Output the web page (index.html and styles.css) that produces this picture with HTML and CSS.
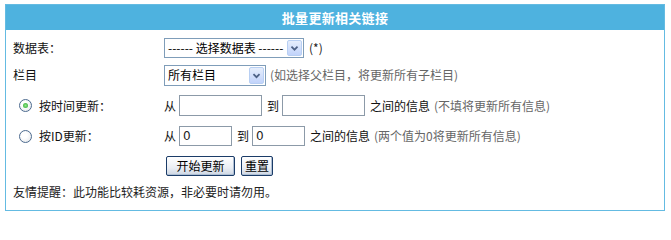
FILE: index.html
```html
<!DOCTYPE html>
<html lang="zh-CN">
<head>
<meta charset="utf-8">
<title>批量更新相关链接</title>
<link rel="stylesheet" href="styles.css">
</head>
<body>
<div class="panel">
  <div class="head">批量更新相关链接</div>
  <div class="body">
    <div class="row r1">
      <div class="label">数据表：</div>
      <div class="ctrl">
        <span class="sel w1"><span class="sel-text">------ 选择数据表 ------</span><span class="arrow"><svg width="15" height="16" viewBox="0 0 15 16"><path d="M4 6.5 L7.5 10 L11 6.5" fill="none" stroke="#4d6185" stroke-width="2"/></svg></span></span>
        <span class="note dark">(*)</span>
      </div>
    </div>
    <div class="row r2">
      <div class="label">栏目</div>
      <div class="ctrl">
        <span class="sel w2"><span class="sel-text">所有栏目</span><span class="arrow"><svg width="15" height="17" viewBox="0 0 15 17"><path d="M4 7 L7.5 10.5 L11 7" fill="none" stroke="#4d6185" stroke-width="2"/></svg></span></span>
        <span class="note">(如选择父栏目，将更新所有子栏目)</span>
      </div>
    </div>
    <div class="row r3">
      <div class="label"><span class="radio on"></span>按时间更新：</div>
      <div class="ctrl">
        <span class="word">从</span><span class="inp w3"></span><span class="word">到</span><span class="inp w3"></span><span class="word">之间的信息</span><span class="note">(不填将更新所有信息)</span>
      </div>
    </div>
    <div class="row r4">
      <div class="label"><span class="radio"></span>按ID更新：</div>
      <div class="ctrl">
        <span class="word">从</span><span class="inp w4">0</span><span class="word">到</span><span class="inp w4">0</span><span class="word">之间的信息</span><span class="note">(两个值为0将更新所有信息)</span>
      </div>
    </div>
    <div class="row r5">
      <div class="label"></div>
      <div class="ctrl">
        <span class="btn b1">开始更新</span><span class="btn b2">重置</span>
      </div>
    </div>
    <div class="tip">友情提醒：此功能比较耗资源，非必要时请勿用。</div>
  </div>
</div>
</body>
</html>
```
FILE: styles.css
```css
html, body {
  margin: 0;
  padding: 0;
  background: #ffffff;
}
body {
  font-family: Tahoma, "DejaVu Sans", "Noto Sans CJK SC", sans-serif;
  font-size: 12px;
  color: #000;
}
.panel {
  margin: 4px 0 0 5px;
  width: 660px;
  height: 207px;
  border: 1px solid #64bbe2;
  box-sizing: border-box;
}
.head {
  height: 25px;
  background: #4eb2df;
  color: #fff;
  font-weight: bold;
  font-size: 13px;
  line-height: 25px;
  text-align: center;
  font-family: "Noto Sans CJK SC", sans-serif;
  letter-spacing: 0.3px;
}
.body {
  padding: 4px 0 0 7px;
}
.row {
  display: flex;
  align-items: center;
}
.r1 { height: 28px; }
.r2 { height: 26px; }
.r3 { height: 35px; }
.r4 { height: 26px; }
.r5 { height: 34px; }
.label {
  width: 151px;
  flex: none;
  display: flex;
  align-items: center;
  line-height: 16px;
  font-family: "Noto Sans CJK SC", sans-serif;
  color: #111;
}
.ctrl {
  display: flex;
  align-items: center;
  font-family: "Noto Sans CJK SC", sans-serif;
  line-height: 16px;
}
.sel {
  display: inline-flex;
  align-items: center;
  border: 1px solid #7f9db9;
  box-sizing: border-box;
  background: #fff;
  padding: 1px;
}
.sel.w1 { width: 140px; height: 20px; }
.sel.w2 { width: 102px; height: 21px; }
.sel-text {
  flex: 1;
  padding-left: 2px;
  white-space: nowrap;
  overflow: hidden;
  color: #000;
  font-size: 12px;
}
.arrow {
  flex: none;
  display: block;
  width: 15px;
  height: 100%;
  box-sizing: border-box;
  border: 1px solid #b8cff3;
  border-radius: 2px;
  background: linear-gradient(#e6eefc, #c1d3fb);
}
.arrow svg { display: block; width: 13px; height: 100%; }
.note {
  color: #666;
  margin-left: 4px;
}
.note.dark { color: #222; margin-left: 5px; }
.word { color: #111; }
.radio {
  width: 11px;
  height: 11px;
  border: 1px solid #4d6b8f;
  border-radius: 50%;
  background: radial-gradient(circle at 40% 40%, #fff 30%, #dfe2e6 100%);
  margin: 0 7px 0 6px;
  position: relative;
  flex: none;
}
.radio.on::after {
  content: "";
  position: absolute;
  left: 3px;
  top: 3px;
  width: 5px;
  height: 5px;
  border-radius: 50%;
  background: radial-gradient(circle, #8fe78a 0%, #2aa52a 100%);
}
.inp {
  display: inline-block;
  border: 1px solid #8c9aa8;
  box-sizing: border-box;
  background: #fff;
  padding-left: 3px;
  font-family: Tahoma, "DejaVu Sans", sans-serif;
  font-size: 12px;
  line-height: 18px;
  color: #222;
}
.w3 { width: 83px; height: 21px; margin: 0 5px 0 3px; }
.w4 { width: 53px; height: 20px; margin: 0 5px 0 3px; }
.btn {
  display: inline-block;
  box-sizing: border-box;
  height: 20px;
  line-height: 18px;
  text-align: center;
  border: 1px solid #1b3c68;
  border-radius: 2px;
  background: linear-gradient(#ffffff, #eaeef4 60%, #cdd6e2);
  color: #000;
  box-shadow: inset -1px -1px 0 #aebfd4;
}
.b1 { width: 69px; margin-left: 2px; }
.b2 { width: 32px; margin-left: 6px; }
.tip {
  font-family: "Noto Sans CJK SC", sans-serif;
  line-height: 16px;
  margin-top: 1px;
  color: #222;
}
```
